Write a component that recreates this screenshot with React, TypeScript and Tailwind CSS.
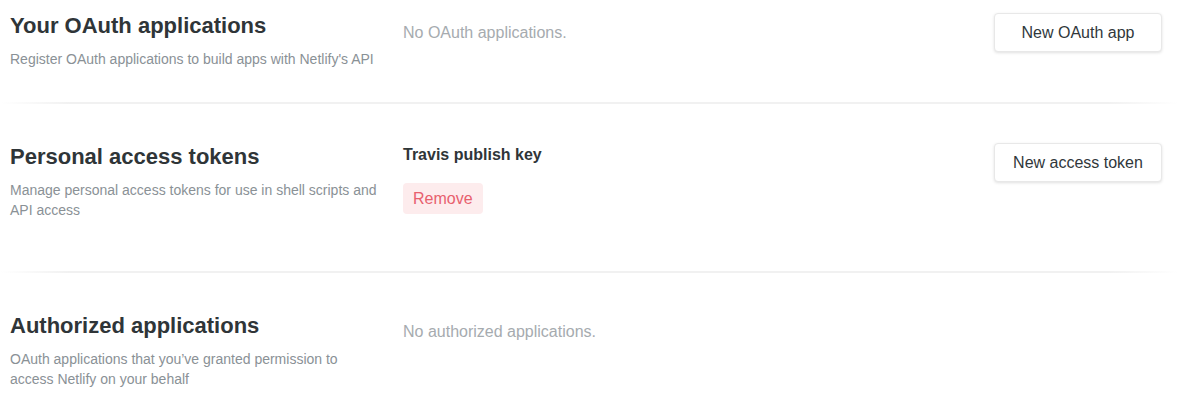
import React from 'react';

interface SectionProps {
  title: string;
  description: string;
  children: React.ReactNode;
  action?: string;
  actionOffset?: string;
  className?: string;
}

function Section({ title, description, children, action, actionOffset = 'mt-[2px]', className }: SectionProps) {
  return (
    <section className={`flex pl-[10px] pr-[16px] ${className ?? ''}`}>
      <div className="w-[375px] shrink-0 mr-[18px]">
        <h2 className="text-[22px] leading-[30px] font-bold text-[#2f3538] mb-2">{title}</h2>
        <p className="text-[14px] leading-[20px] text-[#8a9196]">{description}</p>
      </div>
      <div className="flex-1">{children}</div>
      <div className="w-[168px] shrink-0">
        {action && (
          <button className={`${actionOffset} w-[168px] h-[39px] bg-white border border-[#e8e8e8] rounded-[4px] shadow-[0_1px_3px_rgba(0,0,0,0.12)] text-[16px] text-[#30373b]`}>
            {action}
          </button>
        )}
      </div>
    </section>
  );
}

function Divider() {
  return (
    <div className="h-[2px] bg-[linear-gradient(to_right,transparent,#f1f1f1_6%,#f1f1f1_94%,transparent)]" />
  );
}

export default function App() {
  return (
    <div className="w-[1178px] h-[407px] overflow-hidden bg-white font-['Liberation_Sans',Arial,sans-serif]">
      <Section
        className="pt-[11px] pb-[33px]"
        title="Your OAuth applications"
        description="Register OAuth applications to build apps with Netlify's API"
        action="New OAuth app"
      >
        <p className="mt-[10px] text-[16px] leading-[24px] text-[#a6abaf]">No OAuth applications.</p>
      </Section>
      <Divider />
      <Section
        className="pt-[38px] pb-[34px]"
        title="Personal access tokens"
        description="Manage personal access tokens for use in shell scripts and API access"
        action="New access token"
        actionOffset="mt-[1px]"
      >
        <div className="mt-[1px] pb-[23px]">
          <p className="text-[16px] leading-[24px] font-bold text-[#2f3538]">Travis publish key</p>
          <button className="mt-[16px] h-[31px] px-[10px] rounded-[4px] bg-[#fdeced] text-[16px] text-[#e8606d]">
            Remove
          </button>
        </div>
      </Section>
      <Divider />
      <Section
        className="pt-[38px] pb-[33px]"
        title="Authorized applications"
        description="OAuth applications that you’ve granted permission to access Netlify on your behalf"
      >
        <p className="mt-[9px] text-[16px] leading-[24px] text-[#a6abaf]">No authorized applications.</p>
      </Section>
    </div>
  );
}
